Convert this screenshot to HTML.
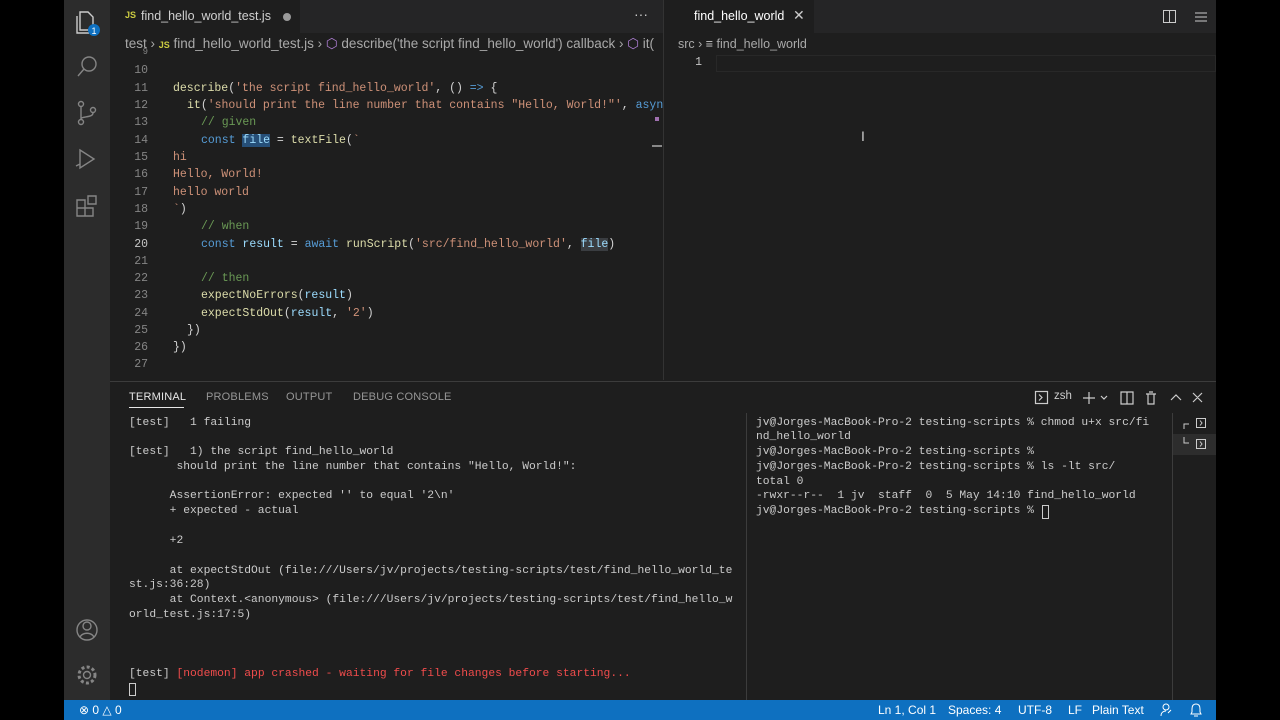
<!DOCTYPE html>
<html><head><meta charset="utf-8"><style>
*{margin:0;padding:0;box-sizing:border-box}
body{width:1280px;height:720px;background:#000;position:relative;overflow:hidden;font-family:"Liberation Sans",sans-serif;color:#ccc}
.a{position:absolute}
.mono{font-family:"Liberation Mono",monospace;font-size:11.5px;white-space:pre}
.ln{position:absolute;left:110px;width:38px;text-align:right;color:#858585}
.ln.cur{color:#c6c6c6}
.cl{position:absolute;left:173px}
.s{color:#ce9178}.k{color:#569cd6}.f{color:#dcdcaa}.c{color:#6a9955}.v{color:#9cdcfe}.p{color:#d4d4d4}
.t{position:absolute;left:129px;color:#cccccc;font-size:11.3px}
.r{position:absolute;left:756px;color:#cccccc;font-size:11.3px}
.ptab{position:absolute;top:391px;font-size:11px;color:#969696;letter-spacing:.2px}
.sb{position:absolute;top:703px;font-size:12px;color:#fff}
</style></head><body>
<div class="a" style="left:64px;top:0;width:1152px;height:720px;background:#1e1e1e"></div>
<div class="a" style="left:64px;top:0;width:46px;height:700px;background:#2c2c2c"></div>
<svg class="a" style="left:64px;top:0" width="46" height="700" fill="none" stroke="#858585" stroke-width="1.4">
<path d="M16 12h8l5 5v13H16z M13 16v17h12" stroke="#ccc"/>
<circle cx="30" cy="30" r="6" fill="#0e70c0" stroke="none"/>
<text x="30" y="34" font-size="9" fill="#fff" stroke="none" text-anchor="middle" font-family="Liberation Sans">1</text>
<circle cx="25" cy="64" r="7"/><path d="M20 69l-6 7"/>
<circle cx="17" cy="104" r="2.5"/><circle cx="17" cy="122" r="2.5"/><circle cx="29" cy="110" r="2.5"/><path d="M17 107v12 M29 113c0 5-12 3-12 6"/>
<path d="M16 150l14 9-14 9z M12 166l4-2"/>
<path d="M13 200h8v8h-8z M13 208h8v8h-8z M21 208h8v8h-8z M24 196h8v8h-8z"/>
<circle cx="23" cy="630" r="10"/><circle cx="23" cy="626" r="4"/><path d="M16 637c3-5 11-5 14 0"/>
<circle cx="23" cy="675" r="3.5"/><circle cx="23" cy="675" r="8" stroke-dasharray="3 2.3" stroke-width="3"/>
</svg>
<div class="a" style="left:110px;top:0;width:553px;height:33px;background:#252526"></div>
<div class="a" style="left:110px;top:0;width:190px;height:33px;background:#1e1e1e"></div>
<div class="a" style="left:125px;top:10px;font-size:9px;font-weight:bold;color:#cbcb41">JS</div>
<div class="a" style="left:141px;top:9px;font-size:12.5px;color:#d0d0d0">find_hello_world_test.js</div>
<div class="a" style="left:283px;top:13px;width:8px;height:8px;border-radius:50%;background:#9a9a9a"></div>
<div class="a" style="left:634px;top:6px;font-size:14px;color:#ccc">···</div>
<div class="a" style="left:663px;top:0;width:1px;height:380px;background:#333"></div>
<div class="a" style="left:664px;top:0;width:552px;height:33px;background:#252526"></div>
<div class="a" style="left:664px;top:0;width:150px;height:33px;background:#1e1e1e"></div>
<div class="a" style="left:694px;top:9px;font-size:12.5px;color:#fff">find_hello_world</div>
<div class="a" style="left:793px;top:7px;font-size:14px;color:#ccc">✕</div>
<svg class="a" style="left:1162px;top:9px" width="50" height="16" fill="none" stroke="#ccc"><rect x="1.5" y="1.5" width="12" height="12"/><path d="M7.5 1.5v12 M33 4h12M33 8h12M33 12h12"/></svg>
<div class="a" style="left:125px;top:36px;font-size:13.5px;color:#a9a9a9;white-space:nowrap">test &#8250; <b style="color:#cbcb41;font-size:9px">JS</b> find_hello_world_test.js &#8250; <span style="color:#b180d7">⬡</span> describe('the script find_hello_world') callback &#8250; <span style="color:#b180d7">⬡</span> it(</div>
<div class="a" style="left:663px;top:33px;width:553px;height:22px;background:#1e1e1e"></div>
<div class="a" style="left:678px;top:37px;font-size:12.5px;color:#a9a9a9">src &#8250; <span style="color:#ccc">≡</span> find_hello_world</div>
<div class="a" style="left:663px;top:33px;width:1px;height:347px;background:#333"></div>
<div class="mono">
<div class="ln" style="top:47px;font-size:9px">9</div>
<div class="ln" style="top:64px">10</div>
<div class="ln" style="top:82px">11</div><div class="cl" style="top:82px"><span class="f">describe</span><span class="p">(</span><span class="s">'the script find_hello_world'</span><span class="p">, () </span><span class="k">=&gt;</span><span class="p"> {</span></div>
<div class="ln" style="top:99px">12</div><div class="cl" style="top:99px;left:187px"><span class="f">it</span><span class="p">(</span><span class="s">'should print the line number that contains "Hello, World!"'</span><span class="p">, </span><span class="k">asyn</span></div>
<div class="ln" style="top:116px">13</div><div class="cl" style="top:116px;left:201px" ><span class="c">// given</span></div>
<div class="ln" style="top:134px">14</div><div class="cl" style="top:134px;left:201px"><span class="k">const</span> <span class="v" style="background:#264f78">file</span><span class="p"> = </span><span class="f">textFile</span><span class="p">(</span><span class="s">`</span></div>
<div class="ln" style="top:151px">15</div><div class="cl s" style="top:151px">hi</div>
<div class="ln" style="top:168px">16</div><div class="cl s" style="top:168px">Hello, World!</div>
<div class="ln" style="top:186px">17</div><div class="cl s" style="top:186px">hello world</div>
<div class="ln" style="top:203px">18</div><div class="cl" style="top:203px"><span class="s">`</span><span class="p">)</span></div>
<div class="ln" style="top:220px">19</div><div class="cl c" style="top:220px;left:201px">// when</div>
<div class="ln cur" style="top:238px">20</div><div class="cl" style="top:238px;left:201px"><span class="k">const</span> <span class="v">result</span><span class="p"> = </span><span class="k">await</span> <span class="f">runScript</span><span class="p">(</span><span class="s">'src/find_hello_world'</span><span class="p">, </span><span class="v" style="background:#3a3d41">file</span><span class="p">)</span></div>
<div class="ln" style="top:255px">21</div>
<div class="ln" style="top:272px">22</div><div class="cl c" style="top:272px;left:201px">// then</div>
<div class="ln" style="top:289px">23</div><div class="cl" style="top:289px;left:201px"><span class="f">expectNoErrors</span><span class="p">(</span><span class="v">result</span><span class="p">)</span></div>
<div class="ln" style="top:307px">24</div><div class="cl" style="top:307px;left:201px"><span class="f">expectStdOut</span><span class="p">(</span><span class="v">result</span><span class="p">, </span><span class="s">'2'</span><span class="p">)</span></div>
<div class="ln" style="top:324px">25</div><div class="cl p" style="top:324px;left:187px">})</div>
<div class="ln" style="top:341px">26</div><div class="cl p" style="top:341px">})</div>
<div class="ln" style="top:358px">27</div>
<div class="ln cur" style="left:664px;width:38px;top:56px">1</div>
</div>
<div class="a" style="left:716px;top:55px;width:500px;height:17px;border:1px solid #282828"></div>
<div class="a" style="left:655px;top:117px;width:4px;height:4px;background:#a070b0"></div>
<div class="a" style="left:652px;top:145px;width:10px;height:2px;background:#888"></div>
<div class="a" style="left:861px;top:128px;font-size:14px;color:#ccc">I</div>
<div class="a" style="left:110px;top:381px;width:1106px;height:1px;background:#3c3c3c"></div>
<div class="ptab" style="left:129px;color:#e7e7e7">TERMINAL</div>
<div class="a" style="left:129px;top:407px;width:55px;height:1px;background:#e7e7e7"></div>
<div class="ptab" style="left:206px">PROBLEMS</div>
<div class="ptab" style="left:286px">OUTPUT</div>
<div class="ptab" style="left:353px">DEBUG CONSOLE</div>
<svg class="a" style="left:1034px;top:389px" width="175" height="18" fill="none" stroke="#ccc" stroke-width="1.2"><rect x="1.5" y="2.5" width="12" height="12"/><path d="M5 5.5l3 3-3 3 M55 3v12M49 9h12 M67 7l3 3 3-3 M87 3h12v12H87z M93 3v12 M112 5h10M114 5v10h6V5 M115 3h4 M137 11l5-5 5 5 M159 4l9 9M168 4l-9 9"/></svg>
<div class="a" style="left:1054px;top:390px;font-size:11.5px;color:#ccc">zsh</div>
<div class="a" style="left:746px;top:413px;width:1px;height:287px;background:#3c3c3c"></div>
<div class="a" style="left:1172px;top:413px;width:1px;height:287px;background:#3c3c3c"></div>
<div class="a" style="left:1173px;top:434px;width:43px;height:21px;background:#2d2d2d"></div>
<svg class="a" style="left:1180px;top:415px" width="32" height="38" fill="none" stroke="#ccc"><path d="M4 14V9h5 M4 22v6h5 M16.5 3.5h9v9h-9z M20 5.5l2 2.5-2 2.5 M16.5 24.5h9v9h-9z M20 26.5l2 2.5-2 2.5"/></svg>
<div class="mono">
<div class="t" style="top:417px">[test]   1 failing</div>
<div class="t" style="top:446px">[test]   1) the script find_hello_world</div>
<div class="t" style="top:461px">       should print the line number that contains "Hello, World!":</div>
<div class="t" style="top:490px">      AssertionError: expected '' to equal '2\n'</div>
<div class="t" style="top:505px">      + expected - actual</div>
<div class="t" style="top:535px">      +2</div>
<div class="t" style="top:565px">      at expectStdOut (file:///Users/jv/projects/testing-scripts/test/find_hello_world_te</div>
<div class="t" style="top:579px">st.js:36:28)</div>
<div class="t" style="top:594px">      at Context.&lt;anonymous&gt; (file:///Users/jv/projects/testing-scripts/test/find_hello_w</div>
<div class="t" style="top:609px">orld_test.js:17:5)</div>
<div class="t" style="top:668px">[test] <span style="color:#f14c4c">[nodemon] app crashed - waiting for file changes before starting...</span></div>
<div class="a" style="left:129px;top:683px;width:7px;height:13px;border:1px solid #ccc"></div>
<div class="r" style="top:417px">jv@Jorges-MacBook-Pro-2 testing-scripts % chmod u+x src/fi</div>
<div class="r" style="top:431px">nd_hello_world</div>
<div class="r" style="top:446px">jv@Jorges-MacBook-Pro-2 testing-scripts %</div>
<div class="r" style="top:461px">jv@Jorges-MacBook-Pro-2 testing-scripts % ls -lt src/</div>
<div class="r" style="top:476px">total 0</div>
<div class="r" style="top:490px">-rwxr--r--  1 jv  staff  0  5 May 14:10 find_hello_world</div>
<div class="r" style="top:505px">jv@Jorges-MacBook-Pro-2 testing-scripts % </div>
<div class="a" style="left:1042px;top:505px;width:7px;height:14px;border:1px solid #ccc"></div>
</div>
<div class="a" style="left:64px;top:700px;width:1152px;height:20px;background:#0e70c0"></div>
<div class="sb" style="left:79px">⊗ 0 △ 0</div>
<div class="sb" style="left:878px">Ln 1, Col 1</div>
<div class="sb" style="left:948px">Spaces: 4</div>
<div class="sb" style="left:1018px">UTF-8</div>
<div class="sb" style="left:1068px">LF</div>
<div class="sb" style="left:1092px">Plain Text</div>
<svg class="a" style="left:1158px;top:702px" width="45" height="16" fill="none" stroke="#fff"><circle cx="8" cy="5" r="3"/><path d="M3 14c0-4 3-5 5-5 M10 11l3-3 M38 2c-3 0-4 2-4 5v3l-1 2h10l-1-2V7c0-3-1-5-4-5z M36 14h4"/></svg>
</body></html>
